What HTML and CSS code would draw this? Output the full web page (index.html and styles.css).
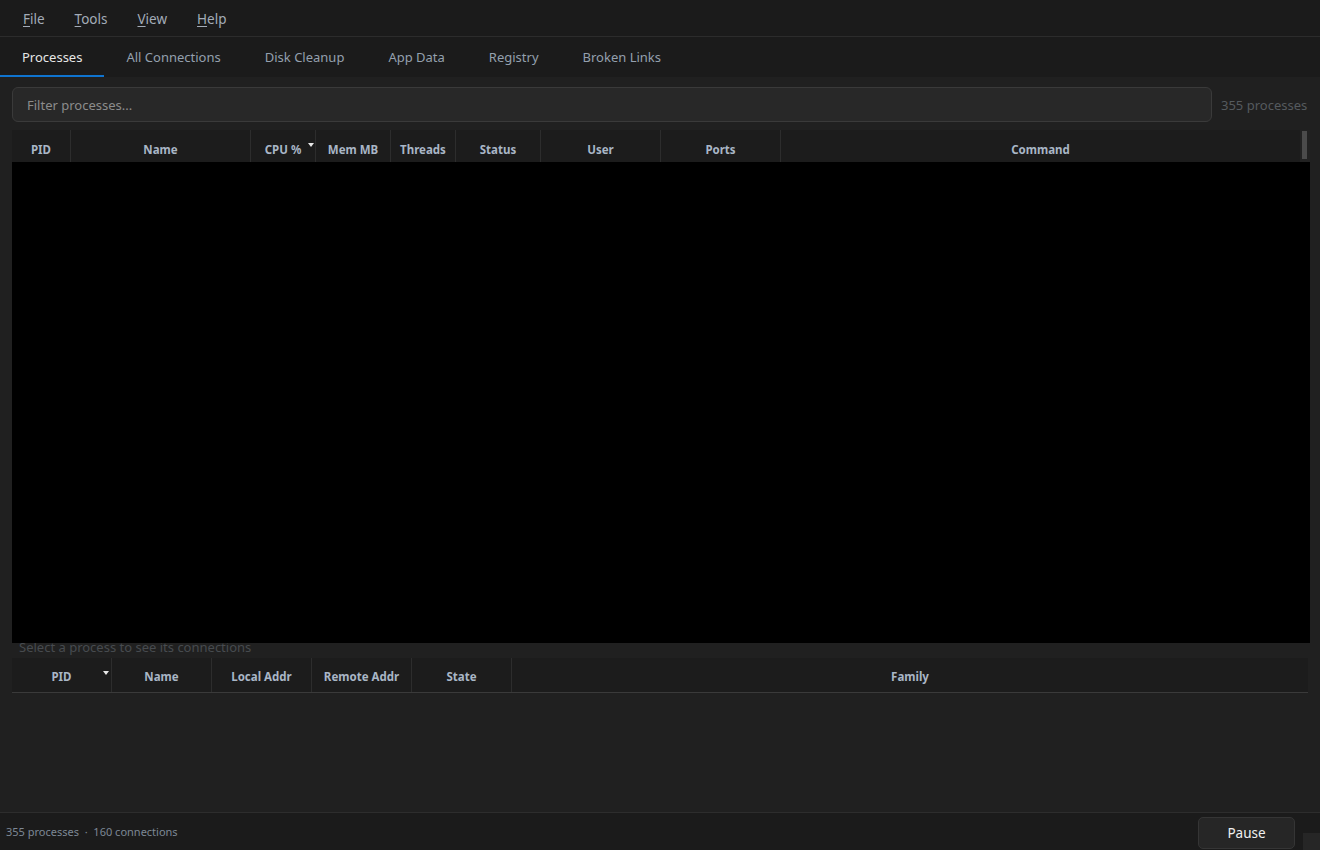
FILE: index.html
```html
<!DOCTYPE html>
<html>
<head>
<meta charset="utf-8">
<link rel="stylesheet" href="styles.css">
</head>
<body>
<div class="app">
  <div class="menubar">
    <span class="menu"><u>F</u>ile</span>
    <span class="menu"><u>T</u>ools</span>
    <span class="menu"><u>V</u>iew</span>
    <span class="menu"><u>H</u>elp</span>
  </div>
  <div class="tabs">
    <div class="tab active">Processes</div>
    <div class="tab">All Connections</div>
    <div class="tab">Disk Cleanup</div>
    <div class="tab">App Data</div>
    <div class="tab">Registry</div>
    <div class="tab">Broken Links</div>
  </div>
  <div class="content">
    <div class="filter-row">
      <div class="filter">Filter processes...</div>
      <div class="count">355 processes</div>
    </div>
    <div class="ptable">
      <div class="phead">
        <div class="cols">
          <div class="th w59">PID</div>
          <div class="th w180">Name</div>
          <div class="th w65 sorted">CPU %<span class="arrow"></span></div>
          <div class="th w75">Mem MB</div>
          <div class="th w65">Threads</div>
          <div class="th w85">Status</div>
          <div class="th w120">User</div>
          <div class="th w120">Ports</div>
          <div class="th grow">Command</div>
        </div>
        <div class="vscroll"><div class="thumb"></div></div>
      </div>
      <div class="pbody"></div>
    </div>
    <div class="hint"><span>Select a process to see its connections</span></div>
    <div class="ctable">
      <div class="th w100 sorted">PID<span class="arrow arrow-c"></span></div>
      <div class="th w100">Name</div>
      <div class="th w100">Local Addr</div>
      <div class="th w100">Remote Addr</div>
      <div class="th w100">State</div>
      <div class="th grow">Family</div>
    </div>
    <div class="spacer"></div>
  </div>
  <div class="statusbar">
    <div class="status">355 processes &nbsp;·&nbsp; 160 connections</div>
    <button class="pause">Pause</button>
    <div class="grip"></div>
  </div>
</div>
</body>
</html>
```
FILE: styles.css
```css
* { box-sizing: border-box; }
html, body { margin: 0; padding: 0; }
body {
  background: #202020;
  font-family: "Noto Sans", "Open Sans", sans-serif;
  color: #a4adb8;
  width: 1320px;
  height: 850px;
  overflow: hidden;
}
.app {
  display: flex;
  flex-direction: column;
  height: 850px;
}
.menubar {
  height: 37px;
  background: #1b1b1b;
  border-bottom: 1px solid #2c2c2c;
  display: flex;
  align-items: center;
  padding-left: 23px;
  padding-top: 2px;
  gap: 30px;
  font-size: 13.5px;
  color: #a3acb8;
}
.menu u { text-decoration-thickness: 1px; text-underline-offset: 2px; }
.tabs {
  height: 40px;
  background: #1b1b1b;
  display: flex;
}
.tab {
  padding: 0 22px;
  font-size: 13px;
  color: #94a0ae;
  display: flex;
  align-items: center;
  border-bottom: 2px solid transparent;
  padding-top: 1px;
}
.tab.active {
  color: #e6e6e6;
  border-bottom-color: #0f74d0;
}
.content {
  flex: 1;
  display: flex;
  flex-direction: column;
  padding: 10px 10px 0 12px;
  background: #202020;
}
.filter-row {
  display: flex;
  align-items: center;
  gap: 9px;
  height: 35px;
}
.filter {
  flex: none;
  width: 1200px;
  height: 35px;
  background: #282828;
  border: 1px solid #3a3a3a;
  border-radius: 6px;
  font-size: 13px;
  color: #8c8c8c;
  display: flex;
  align-items: center;
  padding-left: 14px;
}
.count {
  font-size: 13px;
  color: #555a5e;
  white-space: nowrap;
}
.ptable {
  margin-top: 8px;
  display: flex;
  flex-direction: column;
  width: 1298px;
}
.phead {
  display: flex;
  height: 32px;
}
.cols {
  display: flex;
  flex: 1;
  background: #1c1c1c;
}
.th {
  position: relative;
  display: flex;
  align-items: center;
  justify-content: center;
  font-size: 11.5px;
  font-weight: bold;
  color: #a9b6c6;
  border-right: 1px solid #2d2d2d;
  padding-top: 6px;
  flex: none;
}
.th.grow { flex: 1; border-right: none; }
.w59 { width: 59px; }
.w65 { width: 65px; }
.w75 { width: 75px; }
.w85 { width: 85px; }
.w100 { width: 100px; }
.w120 { width: 120px; }
.w180 { width: 180px; }
.arrow {
  position: absolute;
  right: 1px;
  top: 13px;
  width: 0;
  height: 0;
  border-left: 3.5px solid transparent;
  border-right: 3.5px solid transparent;
  border-top: 4px solid #e8e8e8;
}
.arrow-c { right: 2px; top: 13px; }
.vscroll {
  width: 10px;
  background: #222222;
  padding: 1px 2px 3px 2px;
}
.thumb {
  width: 5px;
  height: 28px;
  background: #4b4b4b;
}
.pbody {
  height: 481px;
  background: #000000;
}
.hint {
  height: 15px;
  overflow: hidden;
  padding-left: 7px;
  font-size: 13px;
  color: #474b4f;
  line-height: 15px;
}
.hint span {
  display: block;
  margin-top: -3px;
}
.ctable {
  display: flex;
  height: 35px;
  width: 1296px;
  background: #1c1c1c;
  border-bottom: 1px solid #3a3a3a;
}
.ctable .th { padding-top: 2px; }
.spacer { flex: 1; }
.statusbar {
  height: 38px;
  background: #1b1b1b;
  border-top: 1px solid #2d2d2d;
  display: flex;
  align-items: center;
  padding-left: 6px;
}
.status {
  flex: 1;
  font-size: 11px;
  color: #7d8895;
}
.pause {
  width: 97px;
  height: 32px;
  margin-top: 2px;
  background: #262626;
  border: 1px solid #353535;
  border-radius: 5px;
  color: #f0f0f0;
  font-family: "Noto Sans", "Open Sans", sans-serif;
  font-size: 13.5px;
  margin-right: 8px;
}
.grip {
  align-self: flex-end;
  width: 17px;
  height: 17px;
  background: #262626;
}
```
